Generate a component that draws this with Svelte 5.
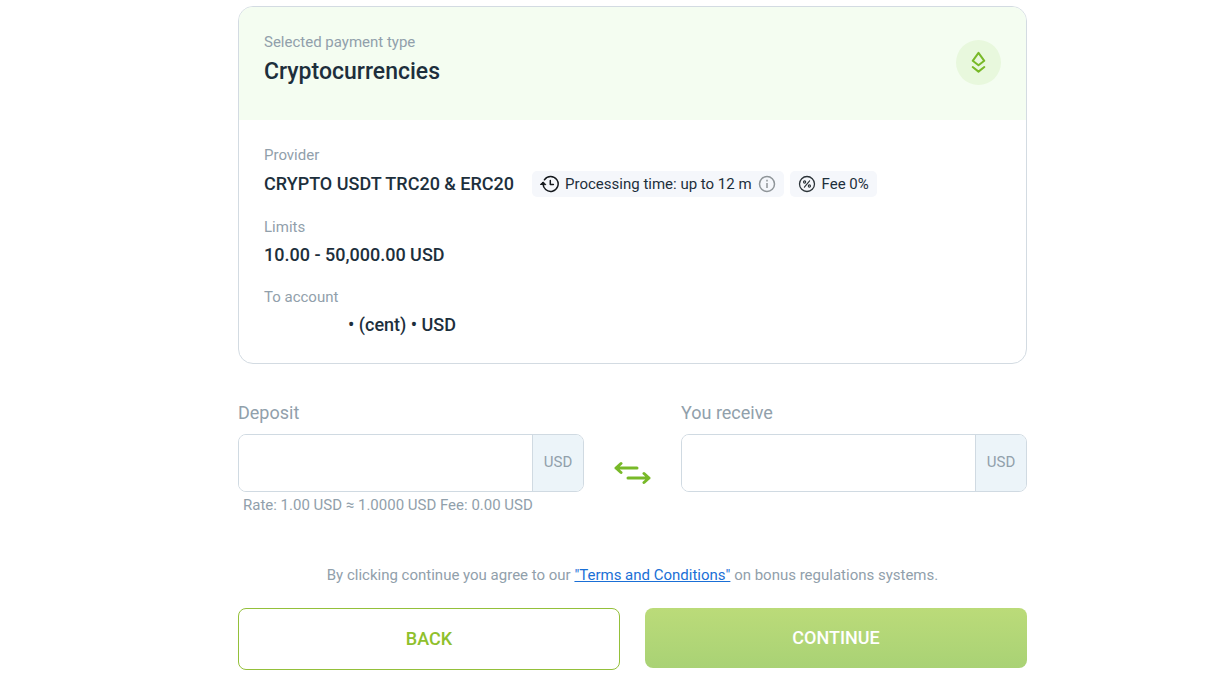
<script>
	let deposit = '';
	let receive = '';

	const currency = 'USD';
	const provider = 'CRYPTO USDT TRC20 & ERC20';
	const limits = '10.00 - 50,000.00 USD';
	const rate = 'Rate: 1.00 USD ≈ 1.0000 USD Fee: 0.00 USD';
</script>

<main>
	<section class="card">
		<header>
			<div>
				<p class="label">Selected payment type</p>
				<h1>Cryptocurrencies</h1>
			</div>
			<span class="type-icon">
				<svg width="17" height="23" viewBox="0 0 17 23" fill="none" stroke="#78b928" stroke-width="2" stroke-linejoin="round" stroke-linecap="round">
					<path d="M8.5 1.8 L14.3 9.8 L8.5 14.3 L2.7 9.8 Z" />
					<path d="M2.7 16 L8.5 20.6 L14.3 16" />
				</svg>
			</span>
		</header>

		<div class="details">
			<p class="label">Provider</p>
			<div class="row">
				<p class="value">{provider}</p>
				<div class="tags">
					<span class="tag">
						<svg width="19" height="18" viewBox="0 0 19 18" fill="none" stroke="#15191d" stroke-width="1.5" stroke-linecap="round" stroke-linejoin="round">
							<path d="M4.4 4.8 A7.5 7.5 0 1 1 3.2 8" />
							<path d="M10.3 5.4 V9.6 H13.4" />
							<path d="M0.6 9.2 L3.2 6.9 L5.6 9.4 Z" fill="#15191d" stroke-width="1" />
						</svg>
						Processing time: up to 12 m
						<svg width="18" height="18" viewBox="0 0 18 18" fill="none" stroke="#8f9599" stroke-width="1.5">
							<circle cx="9" cy="9" r="7.5" />
							<path d="M9 8 V13 M9 4.8 V6.4" />
						</svg>
					</span>
					<span class="tag">
						<svg width="18" height="18" viewBox="0 0 18 18" fill="none" stroke="#2b3338" stroke-width="1.3">
							<circle cx="9" cy="9" r="7.5" />
							<circle cx="6.6" cy="7" r="1.1" stroke-width="1.1" />
							<circle cx="11.4" cy="11" r="1.1" stroke-width="1.1" />
							<path d="M11.6 5.8 L6.4 12.2" stroke-linecap="round" stroke-width="1.1" />
						</svg>
						Fee 0%
					</span>
				</div>
			</div>

			<p class="label">Limits</p>
			<p class="value">{limits}</p>

			<p class="label">To account</p>
			<p class="value account">• (cent) • USD</p>
		</div>
	</section>

	<form on:submit|preventDefault>
		<div class="exchange">
			<div class="field">
				<label for="deposit">Deposit</label>
				<div class="box">
					<input id="deposit" type="text" inputmode="decimal" bind:value={deposit} />
					<span class="currency">{currency}</span>
				</div>
				<p class="rate">{rate}</p>
			</div>

			<svg class="arrows" width="37" height="24" viewBox="0 0 37 24" fill="none" stroke="#78b928" stroke-width="3" stroke-linecap="round" stroke-linejoin="round">
				<path d="M23 7 H2 M7 2.5 L2 7 L7 11.5" />
				<path d="M14 17 H35 M30 12.5 L35 17 L30 21.5" />
			</svg>

			<div class="field">
				<label for="receive">You receive</label>
				<div class="box">
					<input id="receive" type="text" inputmode="decimal" bind:value={receive} />
					<span class="currency">{currency}</span>
				</div>
			</div>
		</div>

		<p class="terms">
			By clicking continue you agree to our <a href="#terms">"Terms and Conditions"</a> on bonus regulations systems.
		</p>

		<div class="buttons">
			<button type="button" class="back">BACK</button>
			<button type="submit" class="continue">CONTINUE</button>
		</div>
	</form>
</main>

<style>
	:global(body) {
		background: #fff;
	}

	* {
		box-sizing: border-box;
	}

	main {
		max-width: 824px;
		margin: 0 auto;
		padding: 6px 0 9px 35px;
		font-family: Roboto, "Liberation Sans", sans-serif;
		font-size: 15px;
		line-height: 20px;
		color: #1d2f3c;
	}

	p,
	h1 {
		margin: 0;
	}

	.card {
		border: 1px solid #d3dbe2;
		border-radius: 15px;
		overflow: hidden;
	}

	header {
		display: flex;
		justify-content: space-between;
		padding: 25px 25px 32px;
		background: #f4fdf1;
	}

	h1 {
		margin-top: 4px;
		font-size: 23px;
		line-height: 32px;
		font-weight: 500;
	}

	.label {
		color: #91a0ab;
	}

	.type-icon {
		display: flex;
		align-items: center;
		justify-content: center;
		width: 45px;
		height: 45px;
		margin-top: 8px;
		border-radius: 50%;
		background: #e8f8dd;
	}

	.details {
		padding: 25px;
	}

	.value {
		font-size: 18px;
		line-height: 26px;
		font-weight: 500;
		margin: 5px 0 19px;
	}

	.row {
		display: flex;
		align-items: center;
		flex-wrap: wrap;
		column-gap: 18px;
		margin: 6px 0 20px;
	}

	.row .value {
		margin: 0;
	}

	.account {
		padding-left: 84px;
		margin-bottom: 0;
	}

	.tags {
		display: flex;
		gap: 6px;
	}

	.tag {
		display: flex;
		align-items: center;
		gap: 6px;
		height: 26px;
		padding: 0 8px;
		border-radius: 5px;
		background: #f5f7fb;
	}

	.exchange {
		display: flex;
		align-items: flex-start;
		gap: 30px;
		margin-top: 37px;
	}

	.field {
		flex: 1;
		min-width: 0;
	}

	.field label {
		display: block;
		margin-bottom: 9px;
		font-size: 18px;
		line-height: 24px;
		color: #91a0ab;
	}

	.box {
		display: flex;
		height: 58px;
		border: 1px solid #d0dae2;
		border-radius: 8px;
		overflow: hidden;
	}

	.box input {
		flex: 1;
		min-width: 0;
		padding: 0 15px;
		border: 0;
		outline: 0;
		background: #fff;
		font: inherit;
		font-size: 18px;
		color: inherit;
	}

	.currency {
		display: flex;
		align-items: center;
		justify-content: center;
		width: 51px;
		padding-bottom: 2px;
		border-left: 1px solid #d0dae2;
		background: #ecf4f9;
		color: #91a0ab;
	}

	.rate {
		padding: 3px 5px 0;
		color: #91a0ab;
	}

	.arrows {
		flex: none;
		margin-top: 60px;
	}

	.terms {
		margin: 50px 0 23px;
		text-align: center;
		color: #91a0ab;
	}

	.terms a {
		color: #1a6fd6;
	}

	.buttons {
		display: grid;
		grid-template-columns: 1fr 1fr;
		align-items: start;
		gap: 25px;
	}

	button {
		height: 60px;
		padding: 0;
		border: 0;
		border-radius: 8px;
		font: inherit;
		font-size: 18px;
		font-weight: 500;
		cursor: pointer;
	}

	.back {
		height: 62px;
		border: 1px solid #94c03a;
		background: #fff;
		color: #8fc02c;
	}

	.continue {
		background: linear-gradient(#bbdb79, #a9d275);
		color: #fff;
	}
</style>
